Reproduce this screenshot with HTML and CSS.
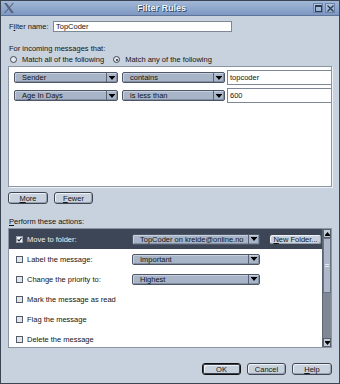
FILE: index.html
```html
<!DOCTYPE html>
<html>
<head>
<meta charset="utf-8">
<link rel="stylesheet" href="styles.css">
</head>
<body>
<div class="window">
  <div class="titlebar">
    <svg class="xlogo" width="10" height="10" viewBox="0 0 10 10"><path d="M0 0h2.6l7.4 10h-2.6z" fill="#56647a"/><path d="M10 0h-1.3l-8.7 10h1.3z" fill="#56647a"/></svg>
    <div class="title">Filter Rules</div>
    <div class="tbtn"><svg width="7" height="7" viewBox="0 0 7 7"><rect x="0.5" y="0.5" width="6" height="6" fill="none" stroke="#2e3a4e"/><line x1="0" y1="1.5" x2="7" y2="1.5" stroke="#2e3a4e"/></svg></div>
    <div class="tbtn"><svg width="7" height="7" viewBox="0 0 7 7"><path d="M0.5 0.5L6.5 6.5M6.5 0.5L0.5 6.5" stroke="#2e3a4e" stroke-width="1.3"/></svg></div>
  </div>
  <div class="content">
    <div class="namerow">
      <span class="namelabel">F<u>i</u>lter name:</span>
      <div class="field namefield">TopCoder</div>
    </div>
    <div class="line incoming">For incoming messages that:</div>
    <div class="radios">
      <span class="radio"></span><span class="rlabel">Match all of the following</span>
      <span class="radio on"></span><span class="rlabel">Match any of the following</span>
    </div>
    <div class="rules">
      <div class="rrow">
        <div class="dd w1"><span class="val">Sender</span><span class="arr"><svg width="6" height="4" viewBox="0 0 6 4"><path d="M0 0h6v1H0zM0.5 1h5L3 4z" fill="#000"/></svg></span></div>
        <div class="dd w2"><span class="val">contains</span><span class="arr"><svg width="6" height="4" viewBox="0 0 6 4"><path d="M0 0h6v1H0zM0.5 1h5L3 4z" fill="#000"/></svg></span></div>
        <div class="field rfield">topcoder</div>
      </div>
      <div class="rrow">
        <div class="dd w1"><span class="val">Age In Days</span><span class="arr"><svg width="6" height="4" viewBox="0 0 6 4"><path d="M0 0h6v1H0zM0.5 1h5L3 4z" fill="#000"/></svg></span></div>
        <div class="dd w2"><span class="val">is less than</span><span class="arr"><svg width="6" height="4" viewBox="0 0 6 4"><path d="M0 0h6v1H0zM0.5 1h5L3 4z" fill="#000"/></svg></span></div>
        <div class="field rfield">600</div>
      </div>
    </div>
    <div class="btnrow">
      <div class="btn bmore"><u>M</u>ore</div>
      <div class="btn bfewer"><u>F</u>ewer</div>
    </div>
    <div class="line perform"><u>P</u>erform these actions:</div>
    <div class="actions">
      <div class="alist">
        <div class="arow sel">
          <span class="cb checked"><svg width="5" height="5" viewBox="0 0 5 5"><path d="M0.5 2.5L2 4L4.5 0.8" fill="none" stroke="#222" stroke-width="1.1"/></svg></span>
          <span class="alabel">Move to folder:</span>
          <div class="dd w3"><span class="val">TopCoder on kreide@online.no</span><span class="arr"><svg width="6" height="4" viewBox="0 0 6 4"><path d="M0 0h6v1H0zM0.5 1h5L3 4z" fill="#000"/></svg></span></div>
          <div class="btn newfolder"><u>N</u>ew Folder...</div>
        </div>
        <div class="arow">
          <span class="cb"></span>
          <span class="alabel">Label the message:</span>
          <div class="dd w3"><span class="val">Important</span><span class="arr"><svg width="6" height="4" viewBox="0 0 6 4"><path d="M0 0h6v1H0zM0.5 1h5L3 4z" fill="#000"/></svg></span></div>
        </div>
        <div class="arow">
          <span class="cb"></span>
          <span class="alabel">Change the priority to:</span>
          <div class="dd w3"><span class="val">Highest</span><span class="arr"><svg width="6" height="4" viewBox="0 0 6 4"><path d="M0 0h6v1H0zM0.5 1h5L3 4z" fill="#000"/></svg></span></div>
        </div>
        <div class="arow">
          <span class="cb"></span>
          <span class="alabel">Mark the message as read</span>
        </div>
        <div class="arow">
          <span class="cb"></span>
          <span class="alabel">Flag the message</span>
        </div>
        <div class="arow">
          <span class="cb"></span>
          <span class="alabel">Delete the message</span>
        </div>
      </div>
      <div class="scrollbar">
        <div class="sarrow"><svg width="5" height="4" viewBox="0 0 5 4"><path d="M2.5 0L5 3H0z" fill="#000"/><rect x="0" y="3" width="5" height="1" fill="#000"/></svg></div>
        <div class="thumb"><span class="grip"></span></div>
        <div class="track"></div>
        <div class="sarrow"><svg width="5" height="4" viewBox="0 0 5 4"><rect x="0" y="0" width="5" height="1" fill="#000"/><path d="M0 1H5L2.5 4z" fill="#000"/></svg></div>
      </div>
    </div>
    <div class="footer">
      <div class="btn fb ok">OK</div>
      <div class="btn fb">Cancel</div>
      <div class="btn fb help"><u>H</u>elp</div>
    </div>
  </div>
</div>
</body>
</html>
```
FILE: styles.css
```css
* { box-sizing: border-box; }
html, body { margin: 0; padding: 0; }
body {
  width: 340px;
  height: 384px;
  overflow: hidden;
  font-family: "Liberation Sans", Arial, sans-serif;
  font-size: 7.5px;
  color: #141414;
  background: #c8d2de;
}
u { text-decoration: underline; text-underline-offset: 1px; }
.window {
  width: 340px;
  height: 384px;
  border: 1px solid #3a4452;
  background: #c8d2de;
  display: flex;
  flex-direction: column;
}
.titlebar {
  height: 15px;
  flex: none;
  display: flex;
  align-items: center;
  padding: 0 4px 0 3px;
  background: linear-gradient(#a3b8d6, #7c98c3);
  border-bottom: 1px solid #5d7398;
}
.xlogo { flex: none; }
.title {
  flex: 1;
  text-align: center;
  font-size: 9px;
  font-weight: bold;
  color: #f4f7fb;
  text-shadow: 1px 1px 0 #34466a, -0.5px -0.5px 0 #4a5e84;
  padding-right: 2px;
}
.tbtn {
  width: 10px;
  height: 10px;
  margin-left: 2px;
  border: 1px solid #6b83a8;
  background: linear-gradient(#b7c8e0, #94acd0);
  display: flex;
  align-items: center;
  justify-content: center;
}
.content {
  flex: 1;
  display: flex;
  flex-direction: column;
  padding: 0 7px;
}
.namerow {
  margin-top: 5px;
  height: 11px;
  display: flex;
  align-items: center;
}
.namelabel { width: 45px; padding-left: 1px; }
.field {
  background: #fff;
  border: 1px solid #7d8796;
  line-height: 9px;
  padding-left: 2px;
  white-space: nowrap;
}
.namefield { width: 179px; height: 11px; }
.line { height: 9px; line-height: 9px; padding-left: 1px; white-space: nowrap; }
.incoming { margin-top: 12px; }
.radios {
  margin-top: 2px;
  height: 9px;
  display: flex;
  align-items: center;
  padding-left: 2px;
}
.radio {
  width: 7px;
  height: 7px;
  border-radius: 50%;
  border: 1px solid #3e4653;
  background: #e4e9ef;
  margin-right: 5px;
  position: relative;
}
.radio.on::after {
  content: "";
  position: absolute;
  left: 1.5px;
  top: 1.5px;
  width: 2px;
  height: 2px;
  border-radius: 50%;
  background: #1c2230;
}
.rlabel { margin-right: 9px; }
.rules {
  margin-top: 2px;
  height: 121px;
  background: #fff;
  border: 1px solid #8a94a2;
  box-shadow: 1px 1px 0 #eef2f6;
  padding: 3px 0 0 5px;
  display: flex;
  flex-direction: column;
  gap: 3px;
  overflow: hidden;
}
.rrow {
  height: 15px;
  display: flex;
  align-items: center;
  flex: none;
}
.dd {
  height: 11px;
  display: flex;
  border: 1px solid #4f5766;
  border-radius: 2px;
  background: #a8b4c7;
  box-shadow: inset 1px 1px 0 #c6d0de, inset -1px -1px 0 #8390a4;
  flex: none;
  white-space: nowrap;
  overflow: hidden;
  color: #141414;
  text-align: left;
}
.dd .val { flex: 1 1 auto; min-width: 0; padding-left: 7px; line-height: 9px; overflow: hidden; }
.dd .arr {
  width: 11px;
  flex: none;
  border-left: 1px solid #5a6373;
  display: flex;
  align-items: center;
  justify-content: center;
}
.w1 { width: 104px; margin-right: 4px; }
.w2 { width: 103px; margin-right: 2px; }
.w3 { width: 128px; justify-self: start; }
.rfield { width: 106px; height: 15px; line-height: 13px; flex: none; }
.btnrow {
  margin-top: 5px;
  height: 12px;
  display: flex;
  gap: 6px;
}
.btn {
  height: 12px;
  border: 1px solid #3f4552;
  border-radius: 3px;
  background: #c8d2de;
  box-shadow: inset 1px 1px 0 #eef2f6, inset -1px -1px 0 #98a2b0;
  display: flex;
  align-items: center;
  justify-content: center;
  white-space: nowrap;
  color: #141414;
}
.bmore { width: 40px; }
.bfewer { width: 39px; }
.perform { margin-top: 13px; }
.actions {
  margin-top: 2px;
  height: 120px;
  background: #fff;
  border: 1px solid #8a94a2;
  display: flex;
  overflow: hidden;
}
.alist { flex: 1; min-width: 0; overflow: hidden; }
.arow {
  height: 20px;
  display: grid;
  grid-template-columns: 11px 105px 128px 62px;
  align-items: center;
  padding-left: 7px;
  white-space: nowrap;
}
.arow.sel { background: #3d4656; color: #eef1f5; }
.cb {
  width: 7px;
  height: 7px;
  border: 1px solid #535b69;
  background: #e2e7ee;
  display: flex;
  align-items: center;
  justify-content: center;
}
.cb.checked { background: #f2f4f7; border-color: #9aa3b0; }
.newfolder { width: 53px; height: 11px; margin-left: 9px; }
.scrollbar {
  width: 9px;
  flex: none;
  display: flex;
  flex-direction: column;
  background: #7f8795;
  border-left: 1px solid #5c6472;
}
.sarrow {
  height: 9px;
  flex: none;
  background: #c2ccd8;
  border: 1px solid #59616e;
  display: flex;
  align-items: center;
  justify-content: center;
}
.thumb {
  height: 55px;
  flex: none;
  background: #aeb8c8;
  border: 1px solid #6a7382;
  display: flex;
  align-items: center;
  justify-content: center;
}
.grip { width: 4px; height: 3px; border-top: 1px solid #e6ebf1; border-bottom: 1px solid #e6ebf1; }
.track { flex: 1; }
.footer {
  margin-top: 15px;
  height: 12px;
  display: flex;
  justify-content: flex-end;
  gap: 6px;
}
.fb { width: 39px; }
.help { width: 40px; }
.ok { border-color: #111; box-shadow: inset 0 0 0 1px #3a404a, inset 2px 2px 0 #eef2f6; }
```
